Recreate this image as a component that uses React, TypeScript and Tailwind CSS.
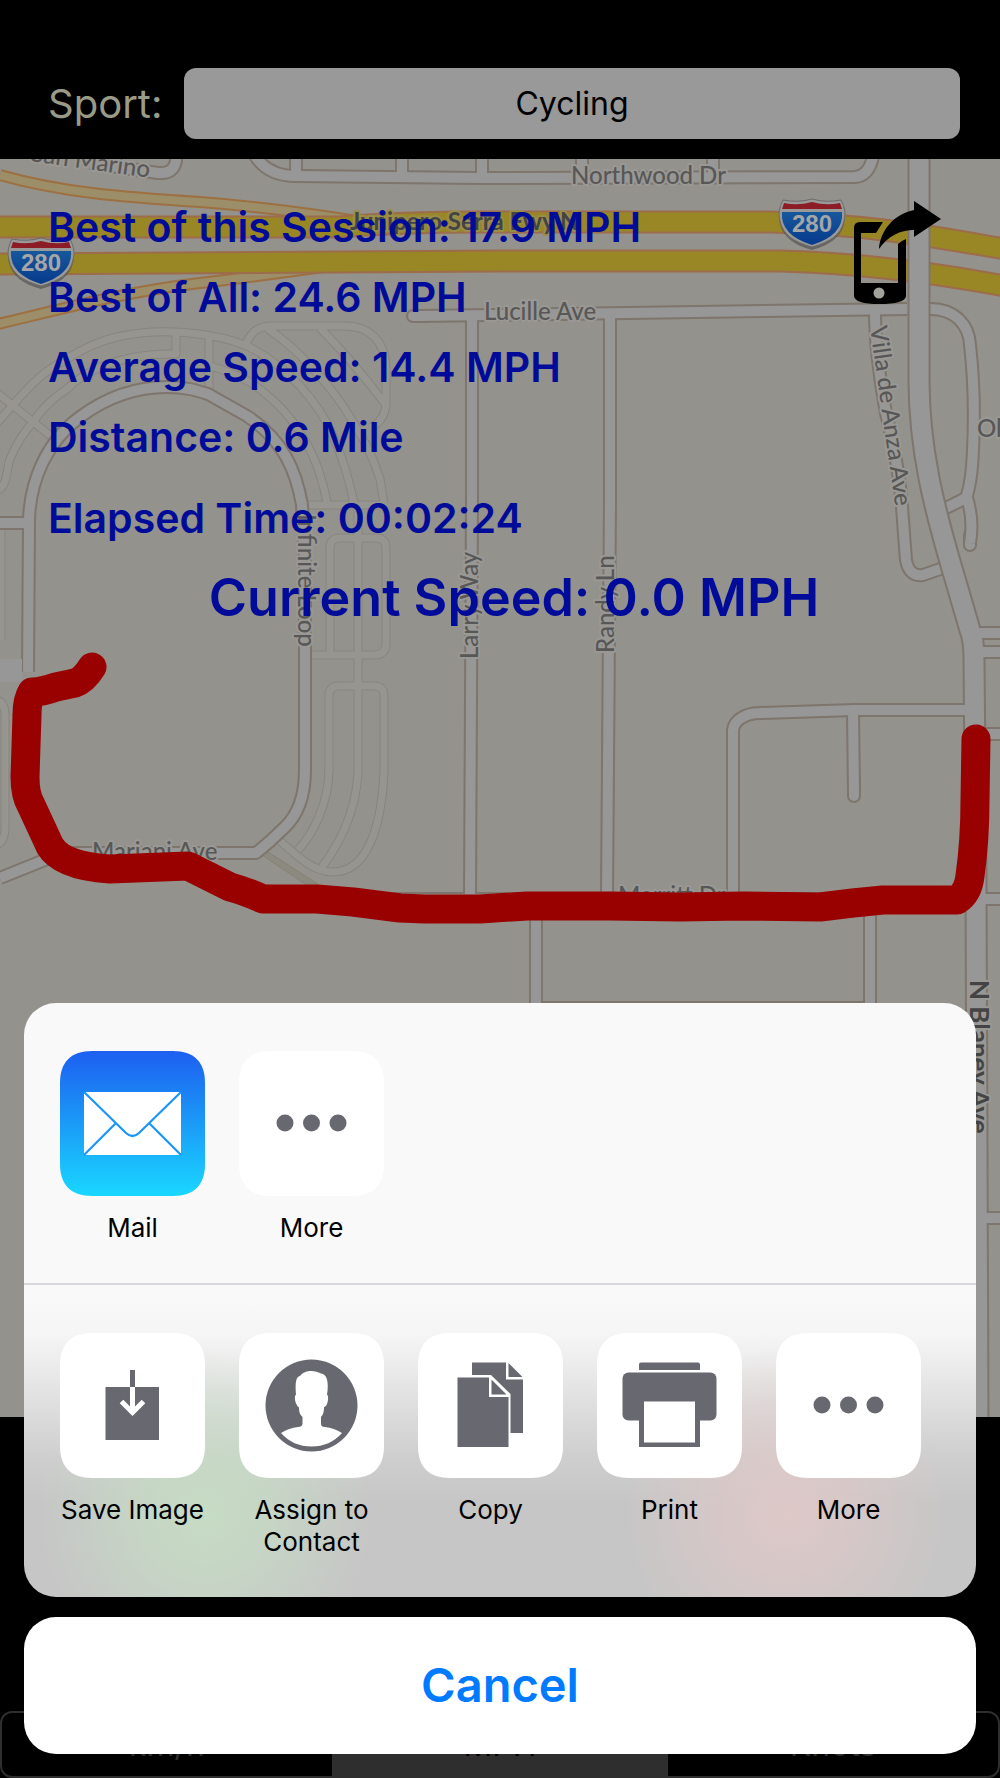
import type { ReactNode } from "react";

const TILE = "#686870";

interface RoadsProps {
  paths: string[];
  width: number;
  border?: number;
  fill: string;
  casing: string;
  cap?: "butt" | "round";
}

// All casings go down first so that crossings stay open.
function Roads({ paths, width, border = 2, fill, casing, cap = "butt" }: RoadsProps) {
  return (
    <g fill="none" strokeLinejoin="round" strokeLinecap={cap}>
      {paths.map((d) => (
        <path key={`c${d}`} d={d} stroke={casing} strokeWidth={width} />
      ))}
      {paths.map((d) => (
        <path key={`f${d}`} d={d} stroke={fill} strokeWidth={width - border * 2} />
      ))}
    </g>
  );
}

const lanes = [
  "M-2 490 C8 485 6 470 10 459 C18 440 25 432 33 422 C45 405 55 397 67 389 C78 378 88 373 100 367 Q135 353 176 354 V334",
  "M-4 424 L13 405 C30 385 45 370 67 359 C85 347 100 341 117 337 Q145 331 173 332 C200 333 225 337 247 346 C270 357 285 370 300 386 Q322 410 333 436 Q346 465 354 503",
  "M-4 392 L52 437",
  "M210 366 C225 370 240 376 253 384 Q277 401 293 422 Q310 446 317 466 Q324 485 327 503",
  "M245 346 C251 332 257 327 270 326 H345 C370 326 386 342 386 370 V402 C386 415 380 423 370 428",
  "M267 328 Q293 346 313 369 Q337 394 353 422 Q371 450 380 479 L384 503",
  "M320 328 Q352 360 386 405",
  "M209 336 V390",
  "M307 505 H386",
  "M358 505 V655",
  "M330 655 V548 Q330 538 340 538 H376 Q386 538 386 548 V643 Q386 655 374 655 H308",
  "M358 655 V770 C357 815 335 850 322 867",
  "M329 770 V696 Q329 686 339 686 H374 Q384 686 384 696 V770 C382 825 368 872 333 872 C310 872 292 850 276 838",
  "M329 768 C329 805 312 835 298 850",
  "M-6 700 Q5 700 5 716 V828 Q5 843 -6 846",
  "M1 640 V528",
];

const streets = [
  "M252 150 Q264 176 296 176 L480 178 L855 177 Q871 176 874 150",
  "M296 150 V176",
  "M402 150 V177",
  "M482 150 V178",
  "M582 150 V177",
  "M713 150 V177",
  "M176 150 C178 168 171 174 158 173 L90 163",
  "M418 316 L907 309",
  "M472 316 V500 L470 897",
  "M610 312 V500 L607 895",
  "M0 523 H28",
  "M28 672 L29 520 C30 482 46 442 80 417 C115 391 145 387 167 387 C185 387 195 390 208 394 L247 416 C283 440 296 470 302 505 L305 560 V770 C305 798 296 817 284 828 Q270 842 256 853 H62 L0 878",
  "M875 312 C875 345 880 380 886 413 C895 450 900 480 902 507 L906 560 Q909 577 923 575 L946 567",
  "M928 309 C955 308 969 325 970 345 C974 380 975 410 973 450 C972 475 969 490 966 498 L942 510",
  "M967 498 Q974 520 970 543",
  "M966 633 H1010",
  "M972 652 H1010",
  "M976 734 H1010",
  "M976 899 H1010",
  "M984 1218 H1010",
  "M733 893 L733 730 C734 720 746 713 760 713 L855 710 H970",
  "M853 712 L854 794",
  "M536 905 V1040",
  "M870 900 V1040",
  "M390 899 H970",
  "M536 1008 H870",
];

function Shield({ x, y }: { x: number; y: number }) {
  return (
    <g transform={`translate(${x} ${y})`}>
      <path
        d="M3 3 Q18 6 32 1 Q46 6 61 3 Q67 14 64 25 C61 38 50 46 32 51 C14 46 3 38 0 25 Q-3 14 3 3Z"
        fill="#4a4a48"
        opacity="0.6"
      />
      <path
        d="M3 1 Q18 4 32 0 Q46 4 61 1 Q67 12 64 22 C61 36 50 43 32 48 C14 43 3 36 0 22 Q-3 12 3 1Z"
        fill="#999"
        stroke="#6b6b6b"
      />
      <path d="M4 4 Q18 7 32 3 Q46 7 60 4 L62 10 H2Z" fill="#8c1d26" />
      <path d="M2 13 H62 Q64 36 32 46 Q0 36 2 13Z" fill="url(#shieldBlue)" />
      <text
        x="32"
        y="33"
        textAnchor="middle"
        fontFamily="Liberation Sans, sans-serif"
        fontSize="24"
        fontWeight="700"
        fill="#a6a6a6"
      >
        280
      </text>
    </g>
  );
}

interface StreetNameProps {
  x: number;
  y: number;
  angle?: number;
  children: string;
}

function StreetName({ x, y, angle = 0, children }: StreetNameProps) {
  return (
    <text transform={`translate(${x} ${y}) rotate(${angle})`}>{children}</text>
  );
}

function MapView() {
  return (
    <svg
      viewBox="0 159 1000 1258"
      preserveAspectRatio="xMidYMin slice"
      className="absolute inset-0 h-full w-full"
      aria-hidden="true"
    >
      <defs>
        <linearGradient id="shieldBlue" x1="0" y1="0" x2="0" y2="1">
          <stop offset="0" stopColor="#16589c" />
          <stop offset="1" stopColor="#073a8d" />
        </linearGradient>
      </defs>
      <rect y="159" width="1000" height="1258" fill="#94928c" />
      <Roads paths={lanes} width={9} border={1} fill="#979590" casing="#878580" />
      <path d="M262 855 L305 884 H318 L268 852Z" fill="#8b8a80" stroke="#858372" />
      <Roads
        paths={["M0 175 C60 192 120 197 200 202 Q280 208 370 223", "M-2 324 C70 307 130 291 200 283 Q260 276 330 266"]}
        width={12}
        fill="#9b8e68"
        casing="#9d7042"
      />
      <Roads paths={["M413 316 H424", "M854 780 V796", "M970 535 L970 545"]} width={14} fill="#979797" casing="#7e756c" cap="round" />
      <Roads paths={streets} width={14} fill="#979797" casing="#7e756c" />
      <Roads
        paths={[
          "M-5 227 H340 Q400 222 480 222 H770 C870 224 940 238 1005 249",
          "M-5 264 L500 261 H780 C860 263 930 272 1005 286",
        ]}
        width={23}
        fill="#998625"
        casing="#9c6c4c"
      />
      <Roads
        paths={["M919 150 V380 C919 450 935 510 951 565 L970 630 Q974 640 974 660 L976 880 L978 1420"]}
        width={23}
        fill="#979797"
        casing="#7e756c"
      />
      <path d="M972 633 H1010 M974 652 H1010 M976 734 H1010 M976 899 H1010 M976 1218 H1010 M960 710 H974" fill="none" stroke="#979797" strokeWidth="10" />
      <path d="M0 659 H22 V682 H0" fill="#979797" />

      <g
        fontFamily="Lato, sans-serif"
        fontSize="24"
        fontWeight="500"
        fill="#575757"
        stroke="#9a9894"
        strokeWidth="4"
        strokeLinejoin="round"
        paintOrder="stroke"
      >
        <StreetName x={30} y={161} angle={8}>San Marino</StreetName>
        <StreetName x={571} y={184}>Northwood Dr</StreetName>
        <StreetName x={484} y={320}>Lucille Ave</StreetName>
        <StreetName x={977} y={437}>Olive Ave</StreetName>
        <StreetName x={298} y={514} angle={90}>Infinite Loop</StreetName>
        <StreetName x={478} y={659} angle={-90}>Larry Way</StreetName>
        <StreetName x={614} y={653} angle={-90}>Randy Ln</StreetName>
        <StreetName x={870} y={327} angle={82}>Villa de Anza Ave</StreetName>
        <StreetName x={92} y={860}>Mariani Ave</StreetName>
        <StreetName x={618} y={904}>Merritt Dr</StreetName>
      </g>
      <g
        fontFamily="Lato, sans-serif"
        fontSize="24"
        fontWeight="700"
        fill="#444"
        paintOrder="stroke"
        strokeWidth="4"
        strokeLinejoin="round"
      >
        <text x="350" y="230" stroke="#998d4a">Junipero Serra Fwy N</text>
        <text transform="translate(970 980) rotate(90)" fontSize="26" stroke="#9a9894">
          N Blaney Ave
        </text>
      </g>

      <Shield x={780} y={199} />
      <Shield x={9} y={238} />

      <path
        d="M92 667 Q84 680 75 683 L56 687 Q42 692 32 692 Q27 700 27 715 L25 777 Q25 795 31 805 L50 846 Q62 866 110 869 L188 866 L230 887 Q245 891 263 899 H317 L353 902 L400 908 L425 909 H480 L527 906 H610 L680 907 L743 906 L820 907 L853 903 L883 900 H957 Q968 893 970 876 Q975 840 975 800 L976 739"
        fill="none"
        stroke="#990000"
        strokeWidth="29"
        strokeLinecap="round"
        strokeLinejoin="round"
      />
    </svg>
  );
}

function SharePhoneIcon() {
  return (
    <svg viewBox="853 200 89 105" className="h-[105px] w-[89px]" aria-hidden="true">
      <path
        fillRule="evenodd"
        d="M860 222 H883 L876 233 H861 V283 H898 V244 Q901 241 906 239 V296 Q905 304 879 304 Q855 304 854 296 V228 Q854 222 860 222Z"
      />
      <circle cx="879" cy="293" r="5.5" fill="#a3a29c" />
      <path d="M941 219 L914 201 V210 C893 214 880 232 879 249 C888 236 900 230 914 230 V237Z" />
    </svg>
  );
}

function Tile({ label, children }: { label: string; children: ReactNode }) {
  return (
    <button type="button" className="flex w-[145px] shrink-0 flex-col items-center gap-4">
      <svg viewBox="0 0 145 145" className="h-[145px] w-[145px]" aria-hidden="true">
        {children}
      </svg>
      <span className="text-[26px] leading-8 text-black">{label}</span>
    </button>
  );
}

const squircle =
  "M32 0 H113 C134 0 145 11 145 32 V113 C145 134 134 145 113 145 H32 C11 145 0 134 0 113 V32 C0 11 11 0 32 0Z";

function MailIcon() {
  return (
    <>
      <defs>
        <linearGradient id="mail" x1="0" y1="0" x2="0" y2="1">
          <stop offset="0" stopColor="#1d5ff0" />
          <stop offset="1" stopColor="#19d7ff" />
        </linearGradient>
      </defs>
      <path d={squircle} fill="url(#mail)" />
      <rect x="24" y="41" width="97" height="63" fill="#fff" />
      <path
        d="M24 41 L66 82 Q72.500 88 79 82 L121 41 M24 104 L55.500 72.500 M121 104 L89.500 72.500"
        fill="none"
        stroke="#1a95fa"
        strokeWidth="2.200"
      />
    </>
  );
}

function MoreIcon() {
  return (
    <>
      <path d={squircle} fill="#fff" />
      <circle cx="46" cy="72" r="8.500" fill={TILE} />
      <circle cx="72.500" cy="72" r="8.500" fill={TILE} />
      <circle cx="99" cy="72" r="8.500" fill={TILE} />
    </>
  );
}

function SaveIcon() {
  return (
    <>
      <path d={squircle} fill="#fff" />
      <path d="M45.500 54 H99 V107 H45.500Z M70 37 H75 V54 H70Z" fill={TILE} />
      <path d="M72.500 54 V79 M61.500 68.500 L72.500 79.500 L83.500 68.500" fill="none" stroke="#fff" strokeWidth="5" />
    </>
  );
}

function ContactIcon() {
  return (
    <>
      <path d={squircle} fill="#fff" />
      <circle cx="72.500" cy="72.500" r="46" fill={TILE} />
      <path
        d="M72.500 38 C67 38 63 40 61 43 C57 44 56 49 57 62 C55 62 56 70 58 72 C58 74 60 73 60 75 C60 79 61 82 63.500 84 V91 Q63 94 59 94 Q50 95 42 100 Q54 113.500 72.500 113.500 Q91 113.500 103 100 Q95 95 86 94 Q82 94 82 91 V84 C84 82 85 79 85 75 C85 73 87 74 87.500 72 C89 70 90 62 88 62 C90 49 88 41 82 40.500 C79 39 76 38 72.500 38Z"
        fill="#fff"
      />
    </>
  );
}

function CopyIcon() {
  return (
    <>
      <path d={squircle} fill="#fff" />
      <path d="M54 29.500 H88 V46.500 H105 V100 H54Z M90.500 30 L104.500 44 H90.500Z" fill={TILE} />
      <path d="M37 42 H73 L92.500 61 V117 H37Z" fill="#fff" />
      <path d="M39.500 44.500 H71 V64 H90.500 V114 H39.500Z M73.500 46.500 L88.500 61.500 H73.500Z" fill={TILE} />
    </>
  );
}

function PrintIcon() {
  return (
    <>
      <path d={squircle} fill="#fff" />
      <path d="M44 29.500 H101 Q103 29.500 103 31.500 V37 H42 V31.500 Q42 29.500 44 29.500Z" fill={TILE} />
      <rect x="25.500" y="39.500" width="94" height="48" rx="6" fill={TILE} />
      <rect x="42" y="66" width="61" height="48" fill={TILE} />
      <rect x="47" y="68.500" width="51" height="41" fill="#fff" />
    </>
  );
}

function ShareSheet() {
  return (
    <div
      role="dialog"
      aria-label="Share"
      className="absolute inset-x-0 bottom-0 flex flex-col gap-5 px-6 pb-6"
    >
      <div className="overflow-hidden rounded-[32px] bg-[radial-gradient(circle_at_19%_86%,#c6dcc4_0,#c6dcc4b0_7%,#c6dcc400_18%),radial-gradient(circle_at_80%_86%,#dec8c8_0,#dec8c8b0_7%,#dec8c800_18%),linear-gradient(to_bottom,#f9f9f9_50%,#f5f5f5_56%,#e2e2e2_66%,#cfcfcf_76%,#c6c6c6_84%)]">
        <div className="flex gap-[34px] border-b-2 border-[#d7d7dc] px-9 pt-12 pb-[39px]">
          <Tile label="Mail">
            <MailIcon />
          </Tile>
          <Tile label="More">
            <MoreIcon />
          </Tile>
        </div>
        <div className="flex items-start gap-[34px] px-9 pt-12 pb-[39px]">
          <Tile label="Save Image">
            <SaveIcon />
          </Tile>
          <Tile label="Assign to Contact">
            <ContactIcon />
          </Tile>
          <Tile label="Copy">
            <CopyIcon />
          </Tile>
          <Tile label="Print">
            <PrintIcon />
          </Tile>
          <Tile label="More">
            <MoreIcon />
          </Tile>
        </div>
      </div>
      <button
        type="button"
        className="h-[137px] w-full rounded-[32px] bg-white text-[47px] font-semibold text-[#007aff]"
      >
        Cancel
      </button>
    </div>
  );
}

const stats = [
  "Best of this Session: 17.9 MPH",
  "Best of All: 24.6 MPH",
  "Average Speed: 14.4 MPH",
  "Distance: 0.6 Mile",
];

export default function App() {
  return (
    <div className="relative flex min-h-screen flex-col bg-black font-['Inter',sans-serif]">
      <header className="flex items-center pt-[68px] pr-10 pb-5 pl-12">
        <label htmlFor="sport" className="w-[136px] shrink-0 text-[40px] leading-[70px] text-[#999b87]">
          Sport:
        </label>
        <input
          id="sport"
          type="text"
          defaultValue="Cycling"
          className="h-[71px] min-w-0 flex-1 rounded-xl bg-[#999] text-center text-[32px] text-black"
        />
      </header>

      <main className="relative flex-1 overflow-hidden">
        <MapView />
        <div className="relative pt-[33px] text-[41px] leading-[70px] font-semibold text-[#000c99]">
          <div className="flex items-start justify-between pr-[58px] pl-12">
            <div>
              {stats.map((line) => (
                <p key={line}>{line}</p>
              ))}
              <p className="mt-[11px]">Elapsed Time: 00:02:24</p>
            </div>
            <button type="button" aria-label="Share session" className="mt-2 text-black">
              <SharePhoneIcon />
            </button>
          </div>
          <p className="mt-[10px] pl-7 text-center text-[52px]">Current Speed: 0.0 MPH</p>
        </div>
      </main>

      <footer className="pt-[294px]">
        <div className="flex h-[67px] overflow-hidden rounded-xl border-2 border-[#2e2e2e] text-[32px] text-[#2e2e2e]">
          <button type="button" className="flex-1">km/h</button>
          <button type="button" className="w-[336px] shrink-0 bg-[#2e2e2e] text-black">MPH</button>
          <button type="button" className="flex-1">Knots</button>
        </div>
      </footer>

      <ShareSheet />
    </div>
  );
}
